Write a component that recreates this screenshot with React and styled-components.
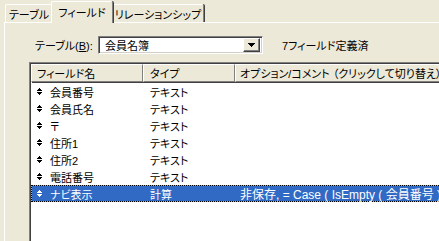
import styled, { createGlobalStyle } from "styled-components";

const GlobalStyle = createGlobalStyle`
  html, body {
    margin: 0;
    padding: 0;
    background: #ece9d8;
  }
  body {
    font-family: "Liberation Sans", "Noto Sans CJK JP", sans-serif;
    font-size: 11px;
    color: #000;
    font-feature-settings: "palt";
  }
`;

const Window = styled.div`
  width: 439px;
  height: 241px;
  overflow: hidden;
  background: #ece9d8;
  display: flex;
  flex-direction: column;
`;

const TabStrip = styled.div`
  display: flex;
  align-items: flex-end;
  height: 22px;
  padding-left: 5px;
  position: relative;
  z-index: 1;
`;

const Tab = styled.div`
  box-sizing: border-box;
  width: ${p => p.$w}px;
  height: ${p => (p.$active ? 22 : 18)}px;
  margin-bottom: ${p => (p.$active ? -1 : 0)}px;
  margin-left: ${p => (p.$active ? -2 : 0)}px;
  margin-right: ${p => (p.$active ? -1 : 0)}px;
  padding-bottom: ${p => (p.$active ? 2 : 0)}px;
  border-top: 1px solid #fff;
  border-left: 1px solid #fff;
  border-right: 1px solid #808080;
  box-shadow: 1px 0 0 #404040;
  border-radius: 2px 2px 0 0;
  background: #ece9d8;
  display: flex;
  align-items: center;
  justify-content: center;
  white-space: nowrap;
  font-size: 11px;
  position: relative;
  z-index: ${p => (p.$active ? 2 : 1)};
`;

const Panel = styled.div`
  flex: 1;
  margin-left: 4px;
  border-top: 1px solid #fff;
  border-left: 1px solid #fff;
  padding: 13px 0 0 24px;
  display: flex;
  flex-direction: column;
  min-height: 0;
`;

const ToolRow = styled.div`
  display: flex;
  align-items: center;
  height: 18px;
  margin-left: 6px;
`;

const Label = styled.span`
  width: 63px;
  white-space: nowrap;
`;

const Combo = styled.div`
  box-sizing: border-box;
  width: 165px;
  height: 18px;
  background: #fff;
  border-top: 1px solid #808080;
  border-left: 1px solid #808080;
  border-bottom: 1px solid #fff;
  border-right: 1px solid #fff;
  box-shadow: inset 1px 1px 0 #404040, inset -1px -1px 0 #d4d0c8;
  display: flex;
  align-items: center;
  justify-content: space-between;
  padding: 0 2px 0 6px;
`;

const DropButton = styled.div`
  box-sizing: border-box;
  width: 17px;
  height: 14px;
  background: #ece9d8;
  border-top: 1px solid #fff;
  border-left: 1px solid #fff;
  border-right: 1px solid #404040;
  border-bottom: 1px solid #404040;
  box-shadow: inset -1px -1px 0 #808080;
  display: flex;
  align-items: center;
  justify-content: center;
`;

const Count = styled.span`
  margin-left: 19px;
  white-space: nowrap;
`;

const List = styled.div`
  flex: 1;
  margin-top: 8px;
  margin-right: -40px;
  background: #fff;
  border-top: 1px solid #808080;
  border-left: 1px solid #808080;
  box-shadow: inset 1px 1px 0 #404040;
  padding: 1px 0 0 1px;
`;

const Columns = styled.div`
  display: grid;
  grid-template-columns: 112px 92px 1fr;
  white-space: nowrap;
`;

const HeaderCell = styled.div`
  box-sizing: border-box;
  height: 18px;
  background: #ece9d8;
  border-top: 1px solid #fff;
  border-left: 1px solid #fff;
  border-right: 1px solid #808080;
  border-bottom: 1px solid #808080;
  box-shadow: 1px 1px 0 #404040;
  display: flex;
  align-items: center;
  padding-left: ${p => p.$pad}px;
  overflow: hidden;
`;

const Row = styled(Columns)`
  box-sizing: border-box;
  height: 17px;
  align-items: center;
  color: ${p => (p.$selected ? "#fff" : "#000")};
  border: 1px dotted ${p => (p.$selected ? "#000" : "transparent")};
  background: ${p =>
    p.$selected ? "linear-gradient(#316ac5, #316ac5) padding-box, #d8a848" : "transparent"};
  margin-top: ${p => (p.$first ? 1 : 0)}px;
`;

const Cell = styled.div`
  display: flex;
  align-items: center;
  padding-left: ${p => p.$pad}px;
  overflow: hidden;
  font-size: ${p => p.$size || 11}px;
`;

const Handle = styled.svg`
  margin-right: 8px;
  flex: none;
`;

const fields = [
  { name: "会員番号", type: "テキスト" },
  { name: "会員氏名", type: "テキスト" },
  { name: "〒", type: "テキスト" },
  { name: "住所1", type: "テキスト" },
  { name: "住所2", type: "テキスト" },
  { name: "電話番号", type: "テキスト" },
  { name: "ナビ表示", type: "計算", option: "非保存, = Case (  IsEmpty ( 会員番号 ) ; \"\" ; \"\" )", selected: true },
];

const MoveHandle = () => (
  <Handle width="5" height="7" viewBox="0 0 5 7" shapeRendering="crispEdges">
    <rect x="2" y="0" width="1" height="1" fill="currentColor" />
    <rect x="1" y="1" width="3" height="1" fill="currentColor" />
    <rect x="0" y="2" width="5" height="1" fill="currentColor" />
    <rect x="0" y="4" width="5" height="1" fill="currentColor" />
    <rect x="1" y="5" width="3" height="1" fill="currentColor" />
    <rect x="2" y="6" width="1" height="1" fill="currentColor" />
  </Handle>
);

export default function App() {
  return (
    <Window>
      <GlobalStyle />
      <TabStrip>
        <Tab $w={48}>テーブル</Tab>
        <Tab $w={62} $active>フィールド</Tab>
        <Tab $w={92}>リレーションシップ</Tab>
      </TabStrip>
      <Panel>
        <ToolRow>
          <Label>テーブル(<u>B</u>):</Label>
          <Combo>
            <span>会員名簿</span>
            <DropButton>
              <svg width="7" height="4" viewBox="0 0 7 4" shapeRendering="crispEdges">
                <path d="M0 0H7L3.5 4Z" fill="#000" />
              </svg>
            </DropButton>
          </Combo>
          <Count>7フィールド定義済</Count>
        </ToolRow>
        <List>
          <Columns>
            <HeaderCell $pad={5}>フィールド名</HeaderCell>
            <HeaderCell $pad={6}>タイプ</HeaderCell>
            <HeaderCell $pad={4}>オプション/コメント （クリックして切り替え）</HeaderCell>
          </Columns>
          {fields.map((f, i) => (
            <Row key={f.name} $selected={f.selected} $first={i === 0}>
              <Cell $pad={5}>
                <MoveHandle />
                {f.name}
              </Cell>
              <Cell $pad={6}>{f.type}</Cell>
              <Cell $pad={4} $size={12}>{f.option}</Cell>
            </Row>
          ))}
        </List>
      </Panel>
    </Window>
  );
}
